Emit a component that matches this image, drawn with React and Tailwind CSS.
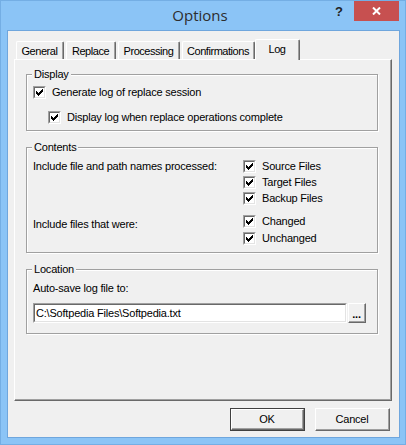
import React from 'react';

const Check = () => (
  <svg width="7" height="7" viewBox="0 0 7 7" shapeRendering="crispEdges">
    <path
      d="M6 0h1v3h-1zM5 1h1v3h-1zM4 2h1v3h-1zM0 2h1v3h-1zM1 3h1v3h-1zM2 4h1v3h-1zM3 3h1v3h-1z"
      fill="#000"
    />
  </svg>
);

const CheckBox = () => (
  <span className="flex w-[13px] h-[13px] shrink-0 border border-t-[#a0a0a0] border-l-[#a0a0a0] border-r-white border-b-white">
    <span className="flex flex-1 items-center justify-center border border-t-[#696969] border-l-[#696969] border-r-[#e3e3e3] border-b-[#e3e3e3] bg-white">
      <Check />
    </span>
  </span>
);

const CheckRow = ({ label, className = '' }) => (
  <div className={`flex items-center h-[13px] gap-[6px] ${className}`}>
    <CheckBox />
    <span className="leading-[13px]">{label}</span>
  </div>
);

const Group = ({ title, legendWidth, className = '', children }) => (
  <div className={`relative w-[352px] border border-[#a0a0a0] shadow-[inset_1px_1px_0_#fff,1px_1px_0_#fff] ${className}`}>
    <span className="absolute -top-[7px] left-[5px] px-[2px] bg-[#f0f0f0] leading-[13px]">{title}</span>
    {children}
  </div>
);

const tabs = [
  { name: 'General', w: 'w-[48px]' },
  { name: 'Replace', w: 'w-[50px]' },
  { name: 'Processing', w: 'w-[62px]' },
  { name: 'Confirmations', w: 'w-[73px]' },
];

export default function App() {
  return (
    <div
      className="w-[406px] h-[445px] bg-[#8bc4f6] border border-[#74aee4] flex flex-col text-[11px] text-black tracking-[-0.2px]"
      style={{ fontFamily: '"Liberation Sans", Arial, sans-serif' }}
    >
      {/* title bar */}
      <div className="flex h-[29px] shrink-0">
        <div className="flex-1" />
        <div
          className="pt-[4px] text-[15px] leading-[20px] text-[#2d2d2d] tracking-normal"
          style={{ fontFamily: '"Open Sans", "Noto Sans", sans-serif' }}
        >
          Options
        </div>
        <div className="flex-1 flex justify-end items-start mr-[6px]">
          <span className="mt-[4px] mr-[11px] text-[13px] font-bold leading-[14px] text-[#222] tracking-normal">?</span>
          <div className="w-[45px] h-[20px] bg-[#c75050] flex items-center justify-center">
            <svg width="9" height="8" viewBox="0 0 9 8">
              <path d="M1 0.5L8 7.5M8 0.5L1 7.5" stroke="#fff" strokeWidth="2" />
            </svg>
          </div>
        </div>
      </div>

      {/* client area */}
      <div className="ml-[6px] w-[393px] h-[408px] border border-[#6fa6dd] bg-[#f0f0f0] flex flex-col">
        {/* tab strip */}
        <div className="relative z-10 flex items-end h-[21px] mt-[8px] -mb-px pl-[8px] gap-[2px]">
          {tabs.map((t) => (
            <div
              key={t.name}
              className={`${t.w} h-[18px] mb-px flex rounded-tl-[2px] rounded-tr-[2px] border-l border-t border-l-white border-t-white border-r border-r-[#696969] bg-[#f0f0f0]`}
            >
              <div className="flex-1 flex items-center justify-center border-r border-r-[#a0a0a0] tracking-[-0.45px] leading-[13px] pt-px">
                {t.name}
              </div>
            </div>
          ))}
          <div className="-ml-[2px] w-[45px] h-[21px] flex rounded-tl-[2px] rounded-tr-[2px] border-l border-t border-l-white border-t-white border-r border-r-[#696969] bg-[#f0f0f0]">
            <div className="flex-1 flex items-start justify-center pt-[3px] border-r border-r-[#a0a0a0] tracking-[-0.45px] leading-[13px]">
              Log
            </div>
          </div>
        </div>

        {/* tab panel */}
        <div className="ml-[6px] w-[378px] h-[342px] shrink-0 flex border-l border-t border-white border-r border-b border-r-[#696969] border-b-[#696969]">
          <div className="flex-1 flex flex-col pl-[11px] pt-[14px] border-r border-b border-r-[#a0a0a0] border-b-[#a0a0a0]">
            <Group title="Display" className="h-[57px]">
              <div className="flex flex-col pl-[6px] pt-[11px]">
                <CheckRow label="Generate log of replace session" />
                <CheckRow label="Display log when replace operations complete" className="mt-[12px] ml-[15px]" />
              </div>
            </Group>

            <Group title="Contents" className="h-[106px] mt-[16px]">
              <div className="flex flex-col pl-[6px] pt-[12px]">
                <div className="flex">
                  <div className="w-[210px] leading-[13px]">Include file and path names processed:</div>
                  <div className="flex flex-col gap-[3px]">
                    <CheckRow label="Source Files" />
                    <CheckRow label="Target Files" />
                    <CheckRow label="Backup Files" />
                  </div>
                </div>
                <div className="flex mt-[10px]">
                  <div className="w-[210px] leading-[13px] pt-[3px]">Include files that were:</div>
                  <div className="flex flex-col gap-[4px]">
                    <CheckRow label="Changed" />
                    <CheckRow label="Unchanged" />
                  </div>
                </div>
              </div>
            </Group>

            <Group title="Location" className="h-[65px] mt-[16px]">
              <div className="flex flex-col pl-[6px] pt-[12px]">
                <div className="leading-[13px]">Auto-save log file to:</div>
                <div className="flex mt-[8px] gap-px">
                  <div className="w-[314px] h-[20px] flex border border-t-[#a0a0a0] border-l-[#a0a0a0] border-r-white border-b-white">
                    <div className="flex-1 flex items-center pl-[1px] bg-white border border-t-[#696969] border-l-[#696969] border-r-[#e3e3e3] border-b-[#e3e3e3] leading-[13px]">
                      C:\Softpedia Files\Softpedia.txt
                    </div>
                  </div>
                  <div className="w-[18px] h-[20px] flex border border-t-white border-l-white border-r-[#696969] border-b-[#696969]">
                    <div className="flex-1 flex items-end justify-center pb-[2px] border-r border-b border-r-[#a0a0a0] border-b-[#a0a0a0] leading-[10px] font-bold">
                      ...
                    </div>
                  </div>
                </div>
              </div>
            </Group>
          </div>
        </div>

        {/* buttons */}
        <div className="flex justify-end gap-[10px] mt-[7px] pr-[9px]">
          <div className="w-[75px] h-[23px] flex border border-[#404040]">
            <div className="flex-1 flex border border-t-white border-l-white border-r-[#696969] border-b-[#696969]">
              <div className="flex-1 flex items-center justify-center border-r border-b border-r-[#a0a0a0] border-b-[#a0a0a0] leading-[13px]">
                OK
              </div>
            </div>
          </div>
          <div className="w-[75px] h-[23px] flex border border-t-white border-l-white border-r-[#696969] border-b-[#696969]">
            <div className="flex-1 flex items-center justify-center border-r border-b border-r-[#a0a0a0] border-b-[#a0a0a0] leading-[13px]">
              Cancel
            </div>
          </div>
        </div>
      </div>
    </div>
  );
}
